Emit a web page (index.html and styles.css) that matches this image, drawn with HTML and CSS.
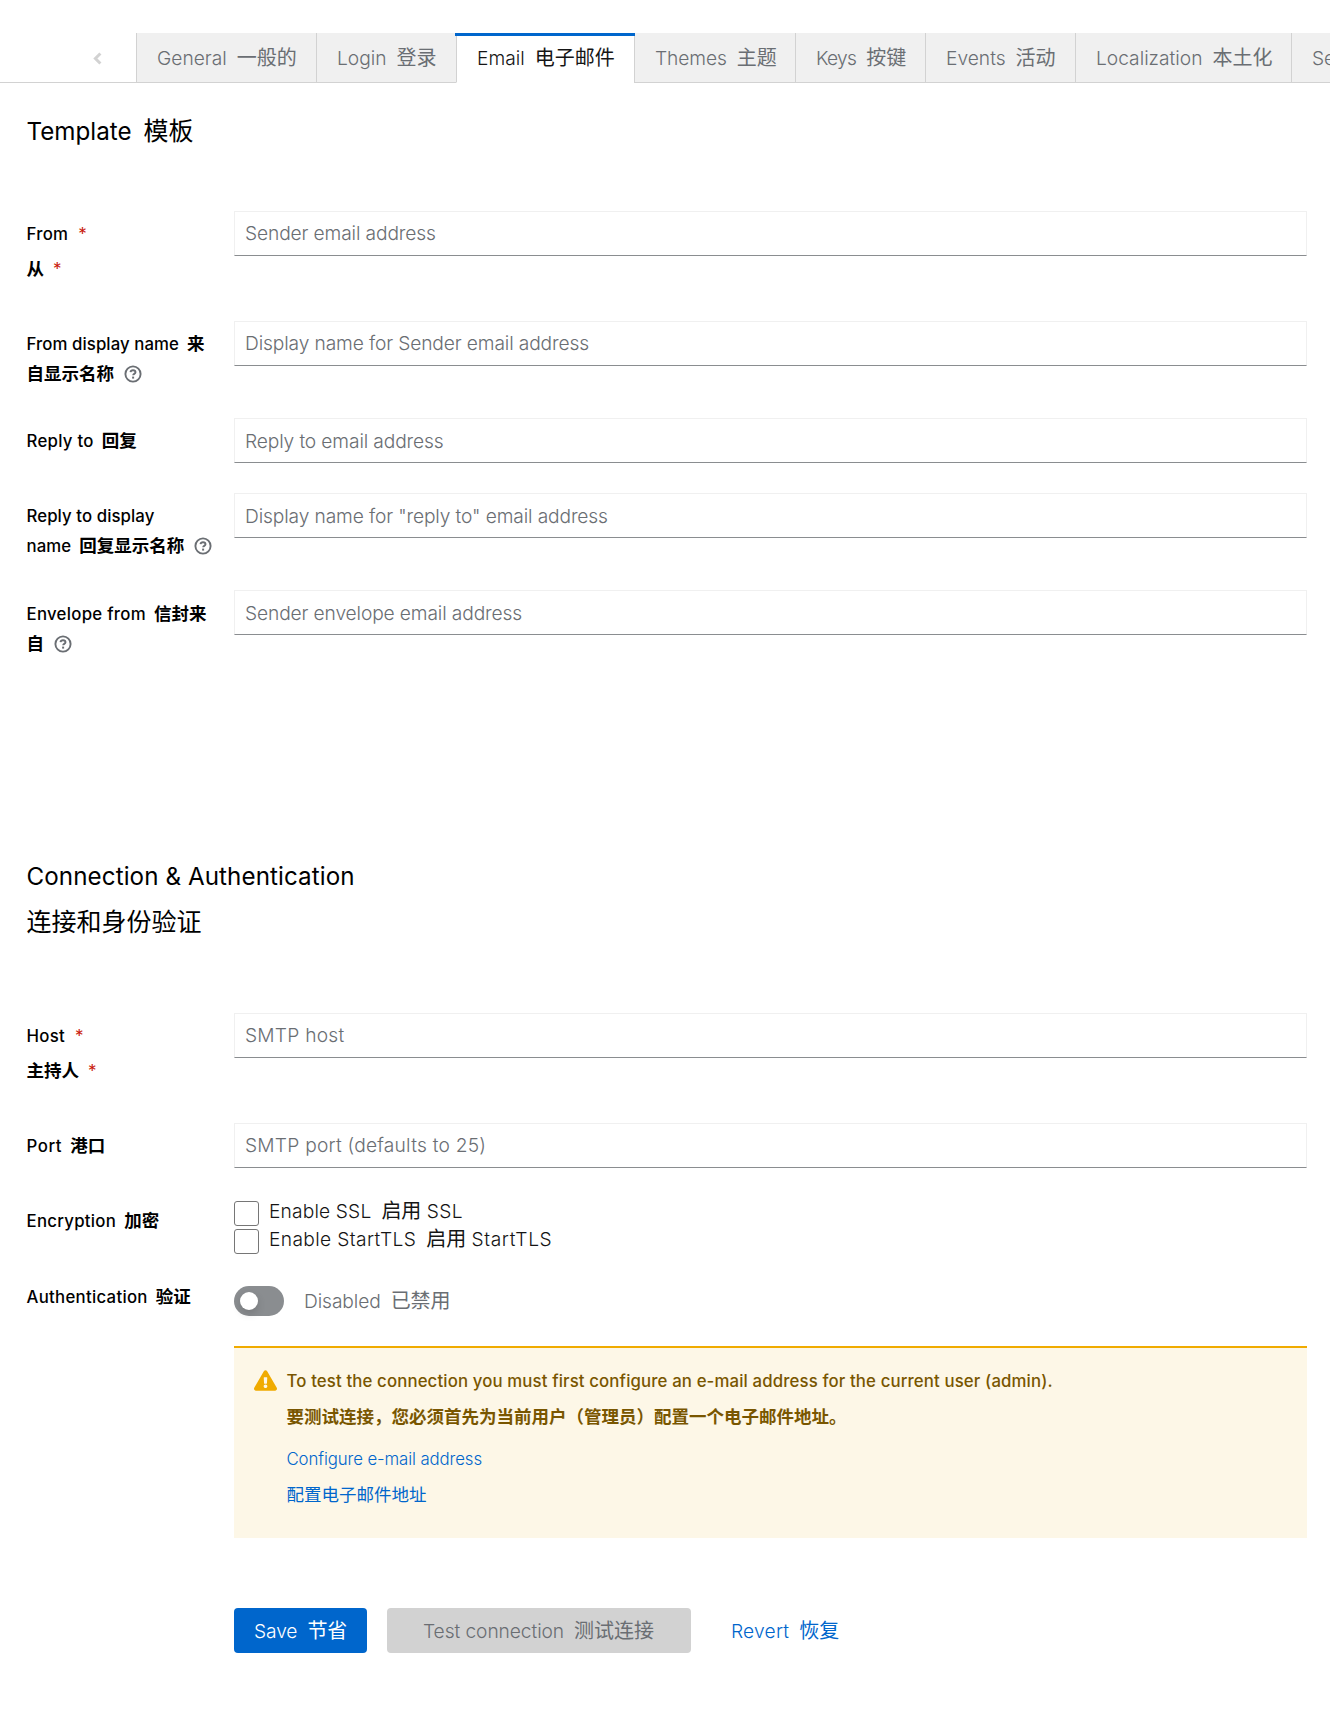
FILE: index.html
```html
<!DOCTYPE html>
<html lang="en">
<head>
<meta charset="utf-8">
<title>Realm settings</title>
<link rel="stylesheet" href="styles.css">
</head>
<body>
<nav class="tabs">
  <button class="scroll-back" aria-label="Scroll back"><svg width="9" height="13" viewBox="0 0 9 13"><path d="M7.400 1.500 2.400 6.500l5 5" fill="none" stroke="#d2d2d2" stroke-width="3"/></svg></button>
  <a class="tab"><span class="en">General</span><span class="zh">一般的</span></a>
  <a class="tab"><span class="en">Login</span><span class="zh">登录</span></a>
  <a class="tab active"><span class="en">Email</span><span class="zh">电子邮件</span></a>
  <a class="tab"><span class="en snug">Themes</span><span class="zh">主题</span></a>
  <a class="tab"><span class="en tight">Keys</span><span class="zh">按键</span></a>
  <a class="tab"><span class="en">Events</span><span class="zh">活动</span></a>
  <a class="tab"><span class="en">Localization</span><span class="zh">本土化</span></a>
  <a class="tab"><span class="en">Security defenses</span></a>
</nav>
<main>
  <section class="template">
    <h1><span class="en">Template</span><span class="zh">模板</span></h1>
    <div class="row tall">
      <div class="label required"><div><span class="en loose">From</span><span class="star">*</span></div><div><span class="zh">从</span><span class="star">*</span></div></div>
      <input class="field" placeholder="Sender email address">
    </div>
    <div class="row double">
      <div class="label"><div><span class="en">From display name</span><span class="zh">来</span></div><div><span class="zh">自显示名称</span><svg class="help" viewBox="0 0 18 18"><circle cx="9" cy="9" r="7.6"/><path d="M6.500 7.200C6.700 5.900 7.700 5.200 9 5.200c1.400 0 2.500.8 2.500 2.100 0 1.600-2.300 1.600-2.300 3"/><path class="dot" d="M8.100 11.600h2v2h-2z"/></svg></div></div>
      <input class="field" placeholder="Display name for Sender email address">
    </div>
    <div class="row">
      <div class="label"><div><span class="en loose">Reply to</span><span class="zh">回复</span></div></div>
      <input class="field" placeholder="Reply to email address">
    </div>
    <div class="row double">
      <div class="label"><div><span class="en">Reply to display</span></div><div><span class="en">name</span><span class="zh">回复显示名称</span><svg class="help" viewBox="0 0 18 18"><circle cx="9" cy="9" r="7.6"/><path d="M6.500 7.200C6.700 5.900 7.700 5.200 9 5.200c1.400 0 2.500.8 2.500 2.100 0 1.600-2.300 1.600-2.300 3"/><path class="dot" d="M8.100 11.600h2v2h-2z"/></svg></div></div>
      <input class="field" placeholder='Display name for "reply to" email address'>
    </div>
    <div class="row double envelope">
      <div class="label"><div><span class="en loose">Envelope from</span><span class="zh">信封来</span></div><div><span class="zh">自</span><svg class="help" viewBox="0 0 18 18"><circle cx="9" cy="9" r="7.6"/><path d="M6.500 7.200C6.700 5.900 7.700 5.200 9 5.200c1.400 0 2.500.8 2.500 2.100 0 1.600-2.300 1.600-2.300 3"/><path class="dot" d="M8.100 11.600h2v2h-2z"/></svg></div></div>
      <input class="field" placeholder="Sender envelope email address">
    </div>
  </section>
  <section class="connection">
    <h1><span class="en">Connection &amp; Authentication</span></h1>
    <h1 class="translated"><span class="zh">连接和身份验证</span></h1>
    <div class="row tall">
      <div class="label required"><div><span class="en loose">Host</span><span class="star">*</span></div><div><span class="zh">主持人</span><span class="star">*</span></div></div>
      <input class="field smtp" placeholder="SMTP host">
    </div>
    <div class="row">
      <div class="label"><div><span class="en loose port">Port</span><span class="zh">港口</span></div></div>
      <input class="field smtp" placeholder="SMTP port (defaults to 25)">
    </div>
    <div class="row">
      <div class="label"><div><span class="en loose">Encryption</span><span class="zh">加密</span></div></div>
      <div class="checks">
        <label class="check"><input type="checkbox"><span class="check-text"><span class="en">Enable SSL</span><span class="zh">启用</span> <span class="en wide">SSL</span></span></label>
        <label class="check"><input type="checkbox"><span class="check-text"><span class="en wide">Enable StartTLS</span><span class="zh">启用</span> <span class="en wider">StartTLS</span></span></label>
      </div>
    </div>
    <div class="row auth">
      <div class="label"><div><span class="en loose">Authentication</span><span class="zh">验证</span></div></div>
      <div class="switch"><span class="track"><span class="knob"></span></span><span class="state"><span class="en snug">Disabled</span><span class="zh">已禁用</span></span></div>
    </div>
    <div class="alert">
      <svg class="warning" viewBox="0 0 576 512"><path fill="#f0ab00" d="M569.5 440C588 472 564.800 512 527.900 512H48.100c-36.900 0-60-40.100-41.600-72L246.400 24c18.500-32 64.700-32 83.200 0l239.900 416zM288 354c-25.400 0-46 20.600-46 46s20.600 46 46 46 46-20.600 46-46-20.600-46-46-46zm-43.700-165.300 7.400 136c.3 6.400 5.600 11.300 12 11.300h48.500c6.400 0 11.600-5 12-11.300l7.400-136c.4-6.900-5.100-12.700-12-12.700h-63.400c-6.900 0-12.300 5.800-11.900 12.700z"/></svg>
      <div class="alert-body">
        <p class="alert-title"><span class="en">To test the connection you must first configure an e-mail address for the current user (admin).</span></p>
        <p class="alert-title"><span class="zh">要测试连接，您必须首先为当前用户（管理员）配置一个电子邮件地址。</span></p>
        <a class="alert-link first"><span class="en snug">Configure e-mail address</span></a>
        <a class="alert-link"><span class="zh">配置电子邮件地址</span></a>
      </div>
    </div>
    <div class="actions">
      <button class="btn primary"><span class="en snug">Save</span><span class="zh">节省</span></button>
      <button class="btn disabled"><span class="en">Test connection</span><span class="zh">测试连接</span></button>
      <button class="btn link"><span class="en wide">Revert</span><span class="zh">恢复</span></button>
    </div>
  </section>
</main>
</body>
</html>
```
FILE: styles.css
```css
* { box-sizing: border-box; }
body {
  margin: 0;
  width: 1330px;
  height: 1736px;
  overflow: hidden;
  background: #fff;
  color: #151515;
  font-family: Inter, "Noto Sans CJK SC", sans-serif;
  font-size: 19.2px;
  font-weight: 300;
}
h1, p { margin: 0; }
button { font: inherit; border: 0; padding: 0; background: none; }
.en.snug { letter-spacing: -.1px; }
.en.tight { letter-spacing: -.7px; }
.zh { font-family: "Noto Sans CJK SC", sans-serif; font-size: 20px; font-weight: 400; line-height: 0; letter-spacing: 0; }
.en + .zh { margin-left: 10px; }

.tabs {
  display: grid;
  grid-template-columns: 136px 180px 140px 178px 161px 130px 150px 216px 180px;
  grid-template-rows: 50px;
  height: 50px;
  margin-top: 33px;
  width: 1330px;
  overflow: hidden;
}
.scroll-back { text-align: left; padding: 0 0 0 93px; border-bottom: 1px solid #d2d2d2; }
.tab {
  padding-left: 20px;
  border-left: 1px solid #d2d2d2;
  border-bottom: 1px solid #d2d2d2;
  background: #f0f0f0;
  color: #6a6e73;
  line-height: 50px;
  white-space: nowrap;
}
.tab.active {
  position: relative;
  border-bottom-color: #fff;
  background: #fff;
  color: #151515;
}
.tab.active::before { content: ""; position: absolute; top: 0; left: -2px; right: -1px; height: 3px; background: #06c; }

main { padding: 0 23px 0 27px; }
h1 { margin-left: -.5px; font-size: 24.2px; font-weight: 400; line-height: 46px; color: #000; }
h1 .zh { font-size: 25px; }
h1 .en + .zh { margin-left: 12px; }
.template { padding-top: 26px; height: 771px; }
.template h1 { margin-bottom: 56px; }
.connection h1 .en { letter-spacing: .08px; }
.translated { margin-bottom: 67px; }

.row { display: grid; grid-template-columns: 207px 1073px; height: 75px; align-items: start; }
.row.tall { height: 110px; }
.row.double { height: 97px; }
.label { padding-top: 8px; margin-left: -.5px; font-size: 16.8px; font-weight: 500; line-height: 30px; color: #000; white-space: nowrap; }
.label .zh, .alert .zh { font-size: 17.5px; }
.label .zh { font-weight: 700; }
.label .en { letter-spacing: .08px; }
.label .en.loose { letter-spacing: .28px; }
.label .en.port { letter-spacing: .6px; }
.label .en + .zh { margin-left: 8px; }
.label.required div + div { padding-top: 4.5px; }
.envelope .label { padding-top: 9px; }
.envelope .label div + div { margin-top: -.5px; }
.star { margin-left: 10px; color: #c9190b; font-size: 17px; font-weight: 400; line-height: 0; }
.zh + .star { margin-left: 9px; }
.help { width: 18px; height: 18px; margin-left: 9.5px; vertical-align: -3px; fill: none; stroke: #6a6e73; stroke-width: 1.9; }
.help .dot { fill: #6a6e73; stroke: none; }
.field {
  width: 1073px;
  height: 45px;
  padding: 0 10px 2px;
  border: 1px solid #f0f0f0;
  border-bottom-color: #8a8d90;
  border-radius: 0;
  background: #fff;
  color: #151515;
  font: inherit;
  letter-spacing: -.13px;
}
.row.double ~ .row .field { padding-bottom: 0; }
.field.smtp { letter-spacing: .22px; }
.field::placeholder { color: #6a6e73; opacity: 1; }

.checks { padding-top: 3px; }
.check { display: flex; height: 28px; }
.check input {
  appearance: none;
  width: 25px;
  height: 25px;
  margin: 0 10px 0 0;
  border: 1px solid #767676;
  border-radius: 3px;
  background: #fff;
}
.check-text { line-height: 26px; margin-top: -3px; }
.check .en { letter-spacing: .15px; }
.check .en.wide { letter-spacing: .36px; }
.check .en.wider { letter-spacing: .6px; }
.link .en.wide { letter-spacing: .2px; }
.switch { display: flex; align-items: center; padding-top: 13px; color: #6a6e73; }
.track { width: 50px; height: 30px; padding: 6px; border-radius: 15px; background: #8a8d90; margin-right: 20px; }
.knob { display: block; width: 18px; height: 18px; border-radius: 50%; background: #fff; box-shadow: 0 4px 8px rgba(3, 3, 3, .15); }
.auth { height: 73px; }
.auth .label { padding-top: 9px; }

.alert { display: flex; width: 1073px; height: 192px; margin-left: 207px; padding: 15px 20px; border-top: 2px solid #f0ab00; background: #fdf7e7; }
.warning { width: 23px; height: 21px; margin: 7px 9.500px 0 0; }
.alert-title { font-size: 16.8px; font-weight: 500; line-height: 36px; height: 36px; color: #795600; }
.alert-title .en { letter-spacing: .13px; }
.alert-title .zh { font-weight: 700; }
.alert-link { display: block; font-size: 16.8px; line-height: 36px; color: #06c; }
.alert-link.first { margin-top: 6px; }
.actions { display: flex; gap: 20px; margin: 70px 0 0 207px; }
.btn { height: 45px; border-radius: 4px; text-align: left; white-space: nowrap; }
.btn .en + .zh { margin-left: 10px; }
.disabled .en { letter-spacing: -.08px; }
.primary { width: 133px; padding-left: 20px; background: #06c; color: #fff; }
.disabled { width: 304px; padding-left: 36px; background: #d2d2d2; color: #6a6e73; }
.link { padding-left: 20px; color: #06c; }
```
